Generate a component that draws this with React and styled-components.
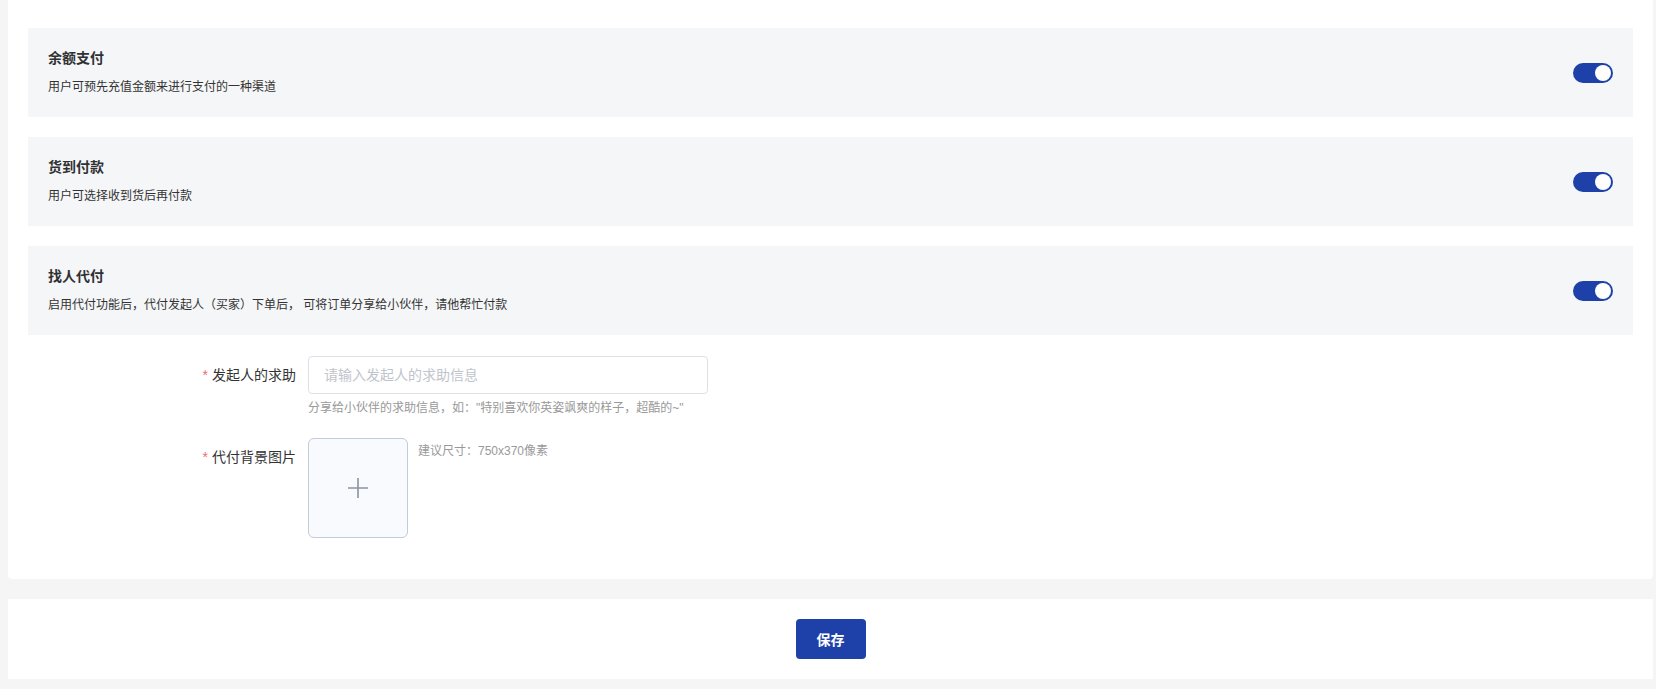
import React, { useState } from 'react'
import styled, { createGlobalStyle } from 'styled-components';

const GlobalStyle = createGlobalStyle`
  body {
    margin: 0;
    background: #f5f5f5;
    font-family: "Liberation Sans", "Noto Sans CJK SC", sans-serif;
    color: #333;
  }
`

const payments = [
  { key: 'balance', title: '余额支付', desc: '用户可预先充值金额来进行支付的一种渠道' },
  { key: 'cod', title: '货到付款', desc: '用户可选择收到货后再付款' },
  { key: 'proxy', title: '找人代付', desc: '启用代付功能后，代付发起人（买家）下单后， 可将订单分享给小伙伴，请他帮忙付款' },
]

const PaySettings = () => {
  const [enabled, setEnabled] = useState({ balance: true, cod: true, proxy: true });

  const toggle = (key) => {
    setEnabled({ ...enabled, [key]: !enabled[key] });
  }

  return (
    <>
      <GlobalStyle />
      <Page>
        <Card>
          <PanelList>
            {payments.map((p) => (
              <Panel key={p.key}>
                <div>
                  <PanelTitle>{p.title}</PanelTitle>
                  <PanelDesc>{p.desc}</PanelDesc>
                </div>
                <Switch $on={enabled[p.key]} onClick={() => toggle(p.key)} />
              </Panel>
            ))}
          </PanelList>

          <Form>
            <FormRow>
              <Label><Star>*</Star>发起人的求助</Label>
              <div>
                <Input placeholder="请输入发起人的求助信息" />
                <Help>分享给小伙伴的求助信息，如："特别喜欢你英姿飒爽的样子，超酷的~"</Help>
              </div>
            </FormRow>
            <FormRow>
              <Label><Star>*</Star>代付背景图片</Label>
              <UploadWrap>
                <UploadBox>
                  <svg width="22" height="22" viewBox="0 0 22 22">
                    <path d="M11 1v20M1 11h20" stroke="#8c939d" strokeWidth="1.6" fill="none" />
                  </svg>
                </UploadBox>
                <Hint>建议尺寸：750x370像素</Hint>
              </UploadWrap>
            </FormRow>
          </Form>
        </Card>

        <Footer>
          <SaveBtn>保存</SaveBtn>
        </Footer>
      </Page>
    </>
  )
}

export default PaySettings


const Page = styled.div`
  display: flex;
  flex-direction: column;
  gap: 20px;
  padding: 0 3px 9px 8px;
`

const Card = styled.div`
  background: #fff;
  padding: 28px 20px 41px;
  border-radius: 0 0 4px 4px;
`

const PanelList = styled.div`
  display: flex;
  flex-direction: column;
  gap: 20px;
`

const Panel = styled.div`
  display: flex;
  align-items: center;
  justify-content: space-between;
  background: #f5f6f8;
  padding: 20px;
  height: 89px;
  box-sizing: border-box;
`

const PanelTitle = styled.div`
  font-size: 14px;
  font-weight: bold;
  line-height: 20px;
  color: #303133;
`

const PanelDesc = styled.div`
  font-size: 12px;
  line-height: 20px;
  margin-top: 9px;
  color: #333;
`

const Switch = styled.button`
  position: relative;
  width: 40px;
  height: 20px;
  border: 0;
  padding: 0;
  border-radius: 10px;
  background: ${(p) => (p.$on ? '#1d41a9' : '#dcdfe6')};
  cursor: pointer;

  &::after {
    content: '';
    position: absolute;
    top: 2px;
    left: ${(p) => (p.$on ? '22px' : '2px')};
    width: 16px;
    height: 16px;
    border-radius: 50%;
    background: #fff;
  }
`

const Form = styled.div`
  display: flex;
  flex-direction: column;
  gap: 20px;
  margin-top: 21px;
`

const FormRow = styled.div`
  display: grid;
  grid-template-columns: 280px 1fr;
`

const Label = styled.label`
  text-align: right;
  padding-right: 12px;
  line-height: 38px;
  font-size: 14px;
  color: #333;
`

const Star = styled.span`
  color: #f56c6c;
  margin-right: 4px;
`

const Input = styled.input`
  display: block;
  width: 400px;
  height: 38px;
  box-sizing: border-box;
  border: 1px solid #dcdfe6;
  border-radius: 4px;
  padding: 0 15px;
  font-size: 14px;
  font-family: inherit;
  color: #333;
  outline: none;

  &::placeholder {
    color: #c0c4cc;
  }
`

const Help = styled.div`
  margin-top: 4px;
  font-size: 12px;
  line-height: 20px;
  color: #999;
`

const UploadWrap = styled.div`
  display: flex;
  align-items: flex-start;
  gap: 10px;
`

const UploadBox = styled.div`
  display: flex;
  align-items: center;
  justify-content: center;
  width: 100px;
  height: 100px;
  box-sizing: border-box;
  border: 1px solid #c0ccda;
  border-radius: 6px;
  background: #f9fafe;
  cursor: pointer;
`

const Hint = styled.div`
  padding-top: 4px;
  font-size: 12px;
  line-height: 18px;
  color: #999;
`

const Footer = styled.div`
  display: flex;
  align-items: center;
  justify-content: center;
  height: 80px;
  background: #fff;
`

const SaveBtn = styled.button`
  width: 70px;
  height: 40px;
  border: 0;
  border-radius: 4px;
  background: #1d41a9;
  color: #fff;
  font-size: 14px;
  font-weight: 600;
  font-family: inherit;
  cursor: pointer;
`
